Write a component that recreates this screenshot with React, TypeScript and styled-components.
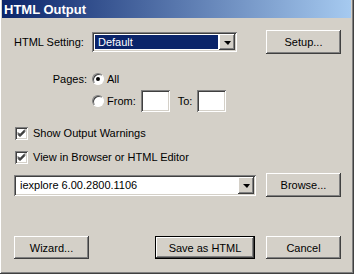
import React from 'react';
import styled, { createGlobalStyle } from 'styled-components';

const Global = createGlobalStyle`
  html, body {
    margin: 0;
    padding: 0;
    background: #d4d0c8;
  }
  body {
    font-family: "Liberation Sans", Arial, sans-serif;
    font-size: 11px;
    color: #000;
  }
`

const raised = `
  box-shadow: inset -1px -1px #404040, inset 1px 1px #ffffff,
    inset -2px -2px #808080, inset 2px 2px #d4d0c8;
`
const sunken = `
  box-shadow: inset 1px 1px #808080, inset -1px -1px #ffffff,
    inset 2px 2px #404040, inset -2px -2px #d4d0c8;
`

const Window = styled.div`
  width: 354px;
  height: 274px;
  box-sizing: border-box;
  background: #d4d0c8;
  padding: 0 3px 3px 2px;
  display: flex;
  flex-direction: column;
  box-shadow: inset -1px -1px #404040, inset 1px 0 #ffffff, inset -2px -2px #808080;
`
const TitleBar = styled.div`
  height: 18px;
  flex: none;
  display: flex;
  align-items: center;
  padding-left: 2px;
  background: linear-gradient(to right, #0a246a, #a6caf0);
  color: #fff;
  font-weight: bold;
  font-size: 13px;
`
const Body = styled.div`
  flex: 1;
  padding: 0 10px 0 12px;
  display: flex;
  flex-direction: column;
`
const Row = styled.div<{ $top: number; $h: number }>`
  display: flex;
  align-items: center;
  margin-top: ${p => p.$top}px;
  height: ${p => p.$h}px;
`
const Label = styled.span<{ $right?: boolean }>`
  width: 78px;
  flex: none;
  box-sizing: border-box;
  text-align: ${p => (p.$right ? 'right' : 'left')};
  padding-right: ${p => (p.$right ? '5px' : '0')};
`
const Button = styled.button<{ $w: number; $h: number; $default?: boolean }>`
  width: ${p => p.$w}px;
  height: ${p => p.$h}px;
  flex: none;
  padding: 0;
  font: inherit;
  color: #000;
  background: #d4d0c8;
  border: ${p => (p.$default ? '1px solid #000' : 'none')};
  ${raised}
`
const Spacer = styled.div`
  flex: 1;
`
const Combo = styled.div<{ $w: number; $h: number }>`
  width: ${p => p.$w}px;
  height: ${p => p.$h}px;
  flex: none;
  box-sizing: border-box;
  padding: 2px;
  display: flex;
  background: #fff;
  ${sunken}
`
const ComboText = styled.div<{ $selected?: boolean }>`
  flex: 1;
  display: flex;
  align-items: center;
  padding-left: 3px;
  margin: 1px;
  background: ${p => (p.$selected ? '#0a246a' : '#fff')};
  color: ${p => (p.$selected ? '#fff' : '#000')};
`
const DropButton = styled.div`
  width: 16px;
  flex: none;
  display: flex;
  align-items: center;
  justify-content: center;
  background: #d4d0c8;
  ${raised}
`
const Arrow = styled.span`
  width: 0;
  height: 0;
  border-left: 4px solid transparent;
  border-right: 3px solid transparent;
  border-top: 4px solid #000;
  margin-top: 1px;
`
const Radio = styled.span<{ $checked?: boolean }>`
  width: 12px;
  height: 12px;
  flex: none;
  box-sizing: border-box;
  border-radius: 50%;
  background: #fff;
  border: 1px solid;
  border-color: #808080 #ffffff #ffffff #808080;
  box-shadow: inset 1px 1px #404040;
  display: flex;
  align-items: center;
  justify-content: center;
  margin-right: 3px;
  &::after {
    content: '';
    width: 4px;
    height: 4px;
    border-radius: 50%;
    background: ${p => (p.$checked ? '#000' : 'transparent')};
  }
`
const TextBox = styled.div`
  width: 29px;
  height: 22px;
  flex: none;
  background: #fff;
  ${sunken}
`
const Gap = styled.span<{ $w: number }>`
  width: ${p => p.$w}px;
  flex: none;
`
const CheckBox = styled.span`
  width: 13px;
  height: 13px;
  flex: none;
  box-sizing: border-box;
  background: #fff;
  display: flex;
  align-items: center;
  justify-content: center;
  margin: 0 5px 0 1px;
  ${sunken}
`

function Check() {
  return (
    <CheckBox>
      <svg width="9" height="9" viewBox="0 0 9 9">
        <path d="M1 3.5 L3 5.5 L8 0.5 M1 4.5 L3 6.5 L8 1.5 M1 5.5 L3 7.5 L8 2.5" stroke="#000" strokeWidth="1" fill="none" />
      </svg>
    </CheckBox>
  )
}

function HtmlOutputDialog() {
  return (
    <Window>
      <TitleBar>HTML Output</TitleBar>
      <Body>
        <Row $top={12} $h={24}>
          <Label>HTML Setting:</Label>
          <Combo $w={145} $h={20}>
            <ComboText $selected>Default</ComboText>
            <DropButton><Arrow /></DropButton>
          </Combo>
          <Spacer />
          <Button $w={75} $h={24}>Setup...</Button>
        </Row>

        <Row $top={17} $h={16}>
          <Label $right>Pages:</Label>
          <Radio $checked />
          <span>All</span>
        </Row>
        <Row $top={3} $h={22}>
          <Label />
          <Radio />
          <span>From:</span>
          <Gap $w={5} />
          <TextBox />
          <Gap $w={8} />
          <span>To:</span>
          <Gap $w={5} />
          <TextBox />
        </Row>

        <Row $top={13} $h={16}>
          <Check />
          <span>Show Output Warnings</span>
        </Row>
        <Row $top={8} $h={16}>
          <Check />
          <span>View in Browser or HTML Editor</span>
        </Row>

        <Row $top={8} $h={24}>
          <Combo $w={242} $h={21}>
            <ComboText>iexplore 6.00.2800.1106</ComboText>
            <DropButton><Arrow /></DropButton>
          </Combo>
          <Spacer />
          <Button $w={75} $h={24}>Browse...</Button>
        </Row>

        <Row $top={39} $h={23}>
          <Button $w={75} $h={23}>Wizard...</Button>
          <Spacer />
          <Button $w={100} $h={23} $default>Save as HTML</Button>
          <Gap $w={11} />
          <Button $w={75} $h={23}>Cancel</Button>
        </Row>
      </Body>
    </Window>
  )
}

export default function App() {
  return (
    <>
      <Global />
      <HtmlOutputDialog />
    </>
  )
}
